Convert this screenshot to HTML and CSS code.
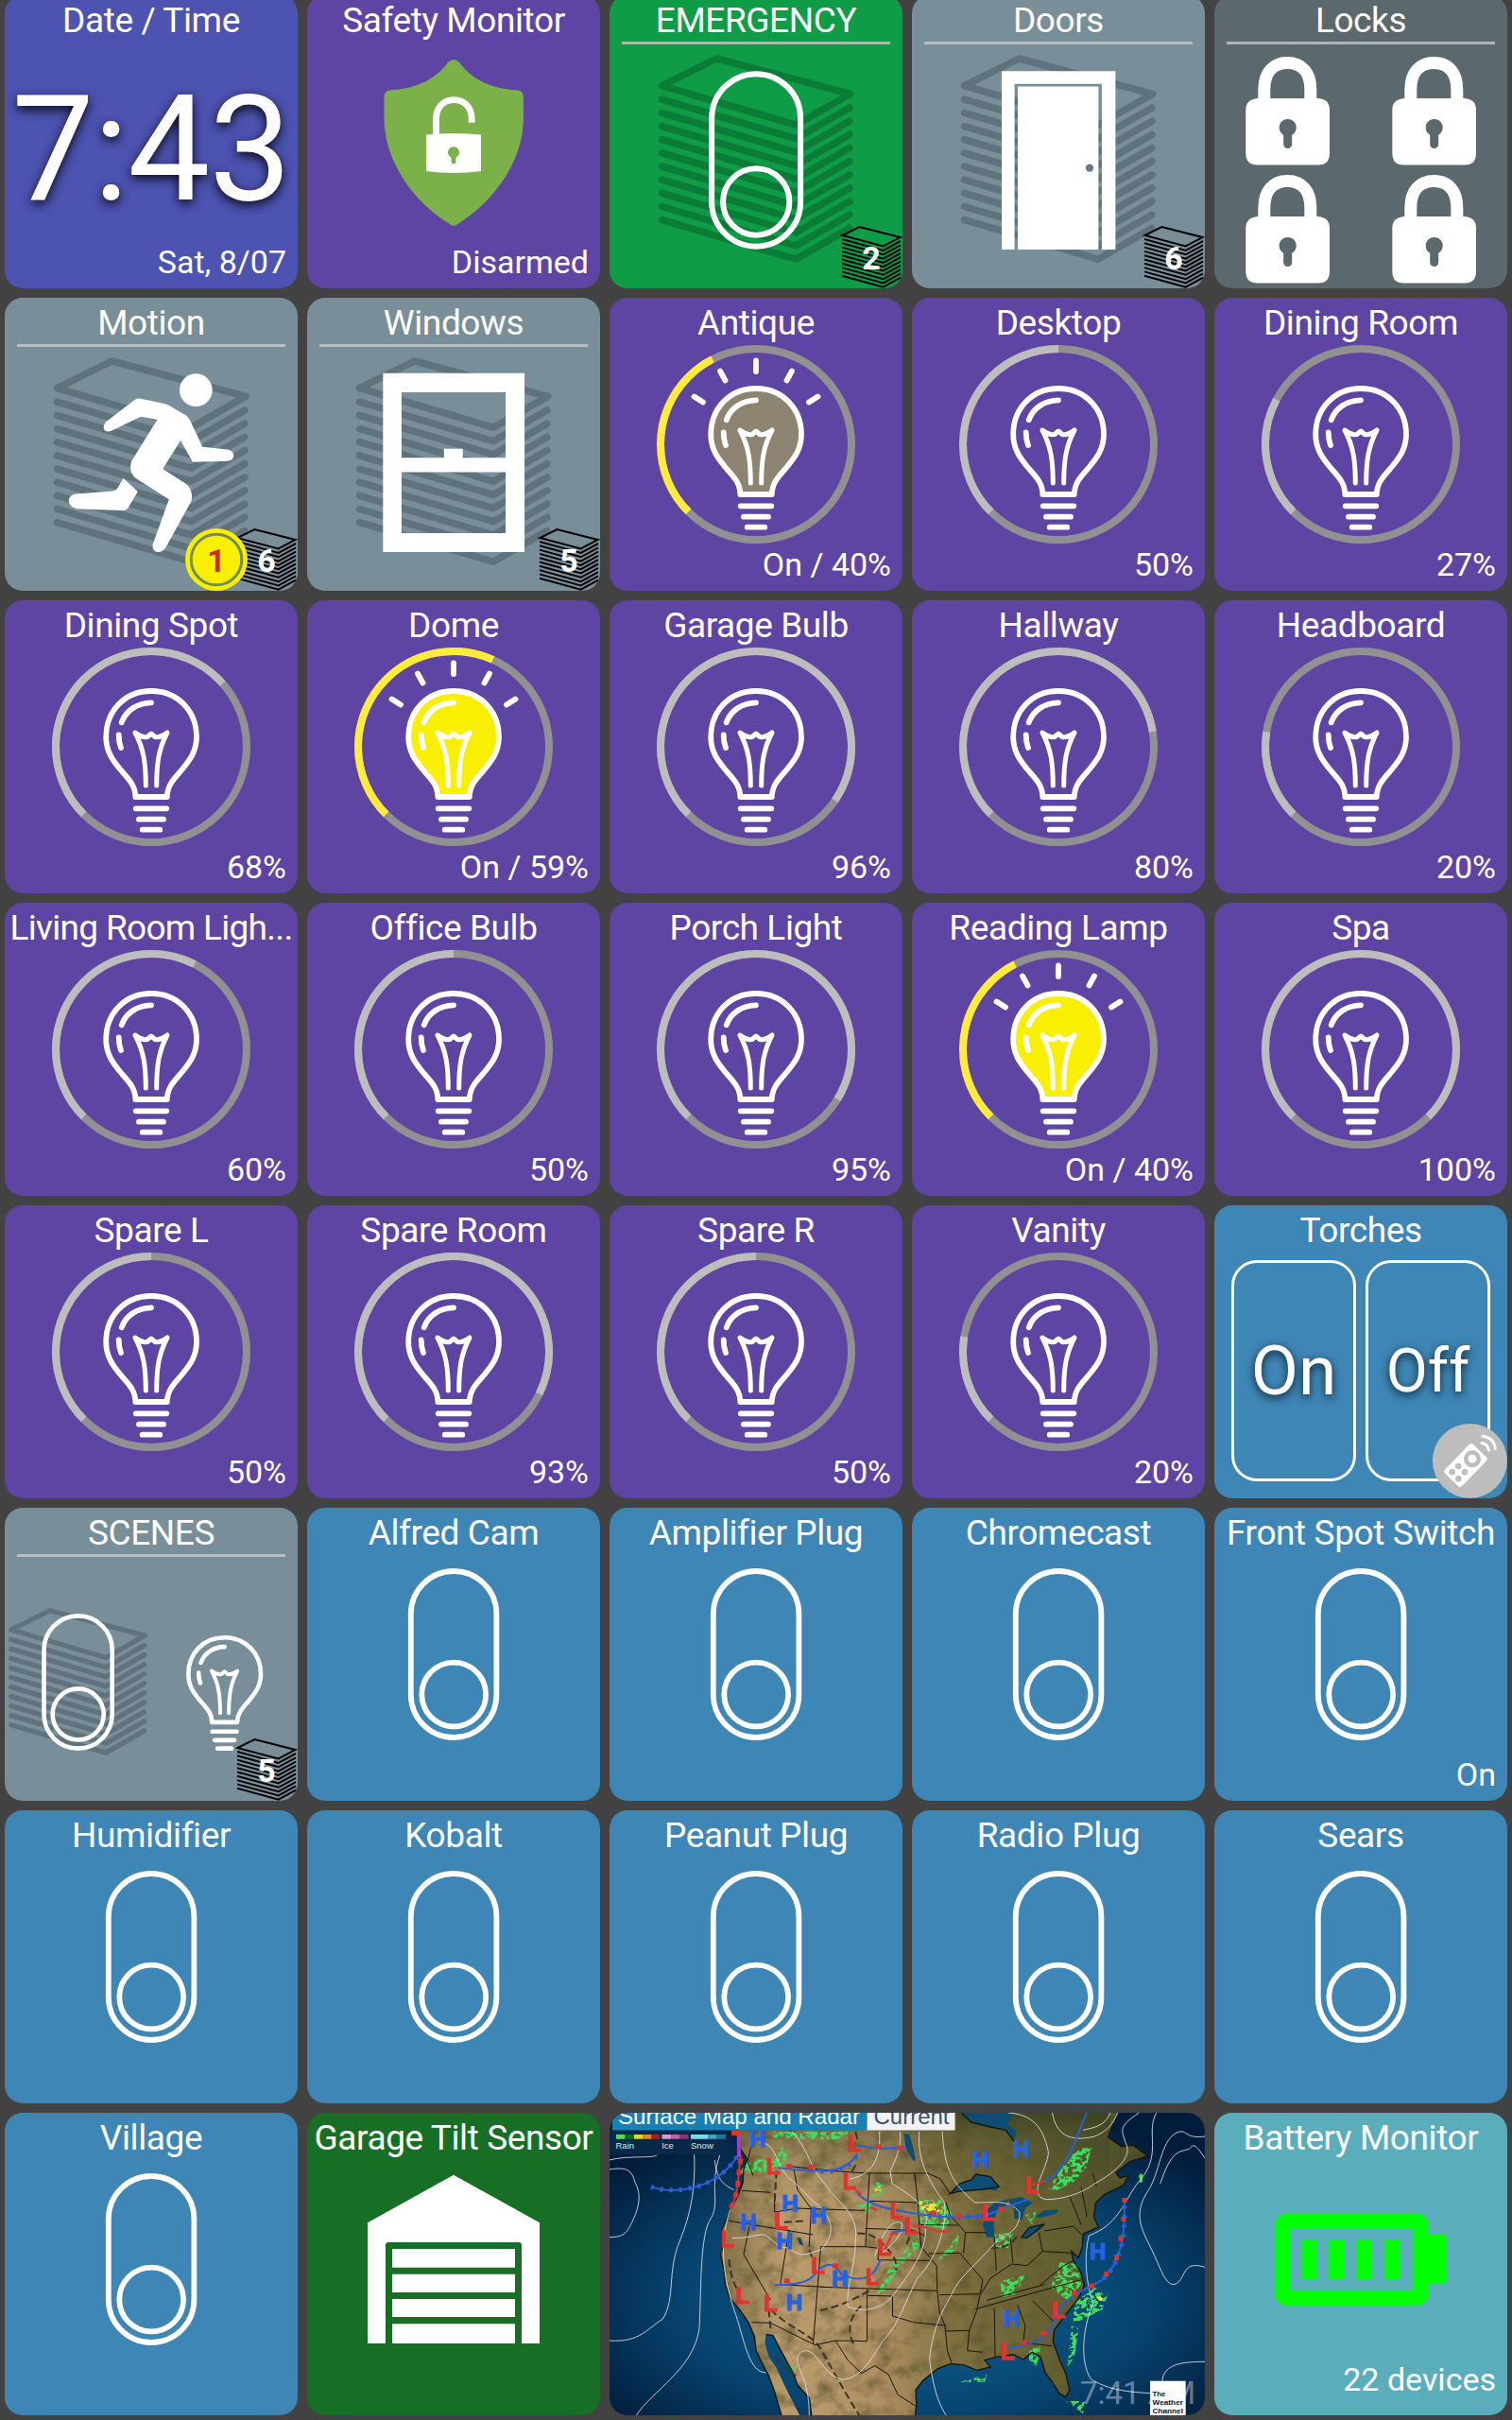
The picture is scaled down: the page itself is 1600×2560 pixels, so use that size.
FILE: index.html
```html
<!DOCTYPE html>
<html lang="en">
<head>
    <meta charset="UTF-8">
    <meta name="viewport" content="width=device-width, initial-scale=1.0">
    <title>Home Dashboard</title>
    <link rel="stylesheet" href="styles.css">
</head>
<body>

    <!-- Shared icons, all drawn on a 310x310 tile -->
    <svg class="sprite" width="0" height="0">
        <defs>
            <g id="stack" class="stack">
                <path d="M55.5 95.7 L113.4 67 L255 104.3 L197 137.2 Z"/>
                <path d="M55.5 110.2 l141.5 41.5 l57 -32.7 M55.5 124.4 l141.5 41.5 l57 -32.7 M55.5 138.6 l141.5 41.5 l57 -32.7 M55.5 152.7 l141.5 41.5 l57 -32.7 M55.5 166.9 l141.5 41.5 l57 -32.7 M55.5 181.1 l141.5 41.5 l57 -32.7 M55.5 195.2 l141.5 41.5 l57 -32.7 M55.5 209.4 l141.5 41.5 l57 -32.7 M55.5 223.5 l141.5 41.5 l57 -32.7 M55.5 237.7 l141.5 41.5 l57 -32.7"/>
            </g>
            <g id="pile" class="pile">
                <path d="M246.5 254 L264.4 245 L307.5 256 L289.7 265.5 Z"/>
                <path d="M246 258 l43.7 12 l18.3 -10 M246 262.3 l43.7 12 l18.3 -10 M246 266.6 l43.7 12 l18.3 -10 M246 270.9 l43.7 12 l18.3 -10 M246 275.2 l43.7 12 l18.3 -10 M246 279.5 l43.7 12 l18.3 -10 M246 283.8 l43.7 12 l18.3 -10 M246 288.1 l43.7 12 l18.3 -10 M246 292.4 l43.7 12 l18.3 -10 M246 296.7 l43.7 12 l18.3 -10"/>
            </g>
            <g id="switch" class="line">
                <rect x="109.8" y="67" width="90.6" height="176" rx="45.3"/>
                <circle cx="155.2" cy="197.5" r="33.9"/>
            </g>
            <path id="glass" d="M155 96 C183 96 203 117 203 144.5 C203 160 196 169 186 181 C177 191 172 197 171.8 208 H138.3 C138.3 197 133 191 124 181 C114 169 107.2 160 107.2 144.5 C107.2 117 127 96 155 96 Z"/>
            <g id="bulb" class="line">
                <use href="#glass"/>
                <path d="M138.7 220.3 H171.3 M142 231.7 H168 M145.7 242.7 H164.3"/>
                <path d="M155 108.3 C140 108.5 128 117 123.7 129.3 M120.7 142.5 Q120.7 150 123 156"/>
                <path class="thin" d="M149.3 196 C149.3 172 147 157 138 140 C143 144 148 145 151 144.5 L155 141 L159 144.5 C162 145 167 144 172 140 C163 157 160.7 172 160.7 196"/>
            </g>
            <path id="rays" class="line" d="M155 66.5 V78 M117 77.5 L122.5 87.5 M193 77.5 L187.5 87.5 M89.5 104.5 L99 110.5 M220.5 104.5 L211 110.5"/>
            <circle id="track" class="track" cx="155" cy="155" r="101"/>
            <g id="lock">
                <path class="shackle" d="M52.8 114 V100 C52.8 82 62 71.5 77.4 71.5 S101.8 82 101.8 100 V114"/>
                <path class="solid" fill-rule="evenodd" d="M46 109 H110 Q122 110 122 121 V167 Q122 179.5 110 179.5 H45.5 Q33.3 179.5 33.3 167 V121 Q33.3 110 46 109 Z M73.2 147.7 V157.5 A4.5 4.5 0 0 0 82.2 157.5 V147.7 A9 9 0 1 0 73.2 147.7 Z"/>
            </g>
        </defs>
    </svg>

    <main class="dashboard">

        <!-- Row 1 -->
        <section class="tile indigo">
            <h2>Date / Time</h2>
            <div class="clock">7:43</div>
            <p class="status">Sat, 8/07</p>
        </section>
        <section class="tile purple">
            <h2>Safety Monitor</h2>
            <svg class="icon" viewBox="0 0 310 310">
                <path class="shield" d="M149 71 Q155 65 161 71 C175 90 196 99 222 100.3 Q228.9 101 228.9 108 V130 C228.9 175 198 218 160 241.5 Q155 246 150 241.5 C112 218 81.5 175 81.5 130 V108 Q81.5 101 88 100.3 C114 99 135 90 149 71 Z"/>
                <path class="small-shackle" d="M136.5 148 V131 C136.5 118 145 110.7 155.3 110.7 S174.2 118 174.2 131 V134.7"/>
                <path class="solid" fill-rule="evenodd" d="M126 147.5 Q155 144.5 184 147.5 V186 Q155 190 126 186 Z M152.6 171.8 V176 A2.4 2.4 0 0 0 157.4 176 V171.8 A6 6 0 1 0 152.6 171.8 Z"/>
            </svg>
            <p class="status">Disarmed</p>
        </section>
        <section class="tile green">
            <h2 class="folder">EMERGENCY</h2>
            <svg class="icon" viewBox="0 0 310 310">
                <use href="#stack"/>
                <use href="#switch" transform="translate(-5.7 13.7) scale(1.037)"/>
                <use href="#pile"/>
            </svg>
            <span class="count">2</span>
        </section>
        <section class="tile slate">
            <h2 class="folder">Doors</h2>
            <svg class="icon" viewBox="0 0 310 310">
                <use href="#stack"/>
                <path class="solid" d="M95 80.3 H215.4 V269 H200.9 V93.8 H108.6 V269 H95 Z M112 96.4 H197.4 V269 H112 Z"/>
                <circle class="knob" cx="188" cy="182.6" r="4.2"/>
                <use href="#pile"/>
            </svg>
            <span class="count">6</span>
        </section>
        <section class="tile steel">
            <h2 class="folder">Locks</h2>
            <svg class="icon" viewBox="0 0 310 310">
                <use href="#lock"/>
                <use href="#lock" x="155"/>
                <use href="#lock" y="125"/>
                <use href="#lock" x="155" y="125"/>
            </svg>
        </section>

        <!-- Row 2 -->
        <section class="tile slate">
            <h2 class="folder">Motion</h2>
            <svg class="icon" viewBox="0 0 310 310">
                <use href="#stack"/>
                <circle class="solid" cx="202.3" cy="97.7" r="17.4"/>
                <path class="solid" d="M138 107.5 Q140.5 106 144 106.8 L170 112.3 Q174 113.5 177 115.8 L192 124.5 Q195 127 196.3 130 L209.3 157.7 L236 160.5 Q242.3 162 242.3 167 Q242 172 236 172.7 L199 173.8 L186 151 L167.2 181 L192 197 Q200 204 197.5 215 L170.5 264 Q167 269.5 161 269 Q156 267.5 156.6 261 L173.8 213.3 L138 190.5 Q131 184 134 173 L161.5 129 L144 125.7 L116 139.3 Q107 144 104.8 138.5 Q104 134.5 107.5 131 Z"/>
                <path class="solid" d="M125.6 191 L140.8 205 L131 221.5 Q129 225.5 124 225 L76 223.2 Q67.5 221 67.7 214 Q69 208 76 207.5 L114 204.5 Q118 204 119.5 201 Z"/>
                <use href="#pile"/>
                <circle class="coin" cx="224" cy="277" r="33"/>
                <circle class="coin-ring" cx="224" cy="277" r="26.8"/>
            </svg>
            <span class="count">6</span>
            <span class="count active">1</span>
        </section>
        <section class="tile slate">
            <h2 class="folder">Windows</h2>
            <svg class="icon" viewBox="0 0 310 310">
                <use href="#stack"/>
                <path class="solid" fill-rule="evenodd" d="M80.3 79.7 H230.1 V269 H80.3 Z M99.9 100 V169.3 H144.8 V159.7 H164.8 V169.3 H210.1 V100 Z M99.9 184.4 V249 H210.1 V184.4 Z"/>
                <use href="#pile"/>
            </svg>
            <span class="count">5</span>
        </section>
        <section class="tile purple">
            <h2>Antique</h2>
            <svg class="icon" viewBox="0 0 310 310">
                <use href="#track"/>
                <circle class="level on" cx="155" cy="155" r="101" pathLength="133.333" stroke-dasharray="40 200"/>
                <use href="#glass" class="dim"/>
                <use href="#bulb"/>
                <use href="#rays"/>
            </svg>
            <p class="status">On / 40%</p>
        </section>
        <section class="tile purple">
            <h2>Desktop</h2>
            <svg class="icon" viewBox="0 0 310 310">
                <use href="#track"/>
                <circle class="level" cx="155" cy="155" r="101" pathLength="133.333" stroke-dasharray="50 200"/>
                <use href="#bulb"/>
            </svg>
            <p class="status">50%</p>
        </section>
        <section class="tile purple">
            <h2>Dining Room</h2>
            <svg class="icon" viewBox="0 0 310 310">
                <use href="#track"/>
                <circle class="level" cx="155" cy="155" r="101" pathLength="133.333" stroke-dasharray="27 200"/>
                <use href="#bulb"/>
            </svg>
            <p class="status">27%</p>
        </section>

        <!-- Row 3 -->
        <section class="tile purple">
            <h2>Dining Spot</h2>
            <svg class="icon" viewBox="0 0 310 310">
                <use href="#track"/>
                <circle class="level" cx="155" cy="155" r="101" pathLength="133.333" stroke-dasharray="68 200"/>
                <use href="#bulb"/>
            </svg>
            <p class="status">68%</p>
        </section>
        <section class="tile purple">
            <h2>Dome</h2>
            <svg class="icon" viewBox="0 0 310 310">
                <use href="#track"/>
                <circle class="level on" cx="155" cy="155" r="101" pathLength="133.333" stroke-dasharray="59 200"/>
                <use href="#glass" class="lit"/>
                <use href="#bulb"/>
                <use href="#rays"/>
            </svg>
            <p class="status">On / 59%</p>
        </section>
        <section class="tile purple">
            <h2>Garage Bulb</h2>
            <svg class="icon" viewBox="0 0 310 310">
                <use href="#track"/>
                <circle class="level" cx="155" cy="155" r="101" pathLength="133.333" stroke-dasharray="96 200"/>
                <use href="#bulb"/>
            </svg>
            <p class="status">96%</p>
        </section>
        <section class="tile purple">
            <h2>Hallway</h2>
            <svg class="icon" viewBox="0 0 310 310">
                <use href="#track"/>
                <circle class="level" cx="155" cy="155" r="101" pathLength="133.333" stroke-dasharray="80 200"/>
                <use href="#bulb"/>
            </svg>
            <p class="status">80%</p>
        </section>
        <section class="tile purple">
            <h2>Headboard</h2>
            <svg class="icon" viewBox="0 0 310 310">
                <use href="#track"/>
                <circle class="level" cx="155" cy="155" r="101" pathLength="133.333" stroke-dasharray="20 200"/>
                <use href="#bulb"/>
            </svg>
            <p class="status">20%</p>
        </section>

        <!-- Row 4 -->
        <section class="tile purple">
            <h2 class="long">Living Room Ligh...</h2>
            <svg class="icon" viewBox="0 0 310 310">
                <use href="#track"/>
                <circle class="level" cx="155" cy="155" r="101" pathLength="133.333" stroke-dasharray="60 200"/>
                <use href="#bulb"/>
            </svg>
            <p class="status">60%</p>
        </section>
        <section class="tile purple">
            <h2>Office Bulb</h2>
            <svg class="icon" viewBox="0 0 310 310">
                <use href="#track"/>
                <circle class="level" cx="155" cy="155" r="101" pathLength="133.333" stroke-dasharray="50 200"/>
                <use href="#bulb"/>
            </svg>
            <p class="status">50%</p>
        </section>
        <section class="tile purple">
            <h2>Porch Light</h2>
            <svg class="icon" viewBox="0 0 310 310">
                <use href="#track"/>
                <circle class="level" cx="155" cy="155" r="101" pathLength="133.333" stroke-dasharray="95 200"/>
                <use href="#bulb"/>
            </svg>
            <p class="status">95%</p>
        </section>
        <section class="tile purple">
            <h2>Reading Lamp</h2>
            <svg class="icon" viewBox="0 0 310 310">
                <use href="#track"/>
                <circle class="level on" cx="155" cy="155" r="101" pathLength="133.333" stroke-dasharray="40 200"/>
                <use href="#glass" class="lit"/>
                <use href="#bulb"/>
                <use href="#rays"/>
            </svg>
            <p class="status">On / 40%</p>
        </section>
        <section class="tile purple">
            <h2>Spa</h2>
            <svg class="icon" viewBox="0 0 310 310">
                <use href="#track"/>
                <circle class="level" cx="155" cy="155" r="101" pathLength="133.333" stroke-dasharray="100 200"/>
                <use href="#bulb"/>
            </svg>
            <p class="status">100%</p>
        </section>

        <!-- Row 5 -->
        <section class="tile purple">
            <h2>Spare L</h2>
            <svg class="icon" viewBox="0 0 310 310">
                <use href="#track"/>
                <circle class="level" cx="155" cy="155" r="101" pathLength="133.333" stroke-dasharray="50 200"/>
                <use href="#bulb"/>
            </svg>
            <p class="status">50%</p>
        </section>
        <section class="tile purple">
            <h2>Spare Room</h2>
            <svg class="icon" viewBox="0 0 310 310">
                <use href="#track"/>
                <circle class="level" cx="155" cy="155" r="101" pathLength="133.333" stroke-dasharray="93 200"/>
                <use href="#bulb"/>
            </svg>
            <p class="status">93%</p>
        </section>
        <section class="tile purple">
            <h2>Spare R</h2>
            <svg class="icon" viewBox="0 0 310 310">
                <use href="#track"/>
                <circle class="level" cx="155" cy="155" r="101" pathLength="133.333" stroke-dasharray="50 200"/>
                <use href="#bulb"/>
            </svg>
            <p class="status">50%</p>
        </section>
        <section class="tile purple">
            <h2>Vanity</h2>
            <svg class="icon" viewBox="0 0 310 310">
                <use href="#track"/>
                <circle class="level" cx="155" cy="155" r="101" pathLength="133.333" stroke-dasharray="20 200"/>
                <use href="#bulb"/>
            </svg>
            <p class="status">20%</p>
        </section>
        <section class="tile blue">
            <h2>Torches</h2>
            <div class="torches">
                <button class="torch-on">On</button>
                <button class="torch-off">Off</button>
            </div>
            <svg class="icon" viewBox="0 0 310 310">
                <circle class="remote-bg" cx="270.4" cy="270.4" r="39.5"/>
                <g transform="rotate(-46 266 275)">
                    <rect class="solid" x="244.5" y="262.5" width="43" height="25" rx="3"/>
                </g>
                <circle class="remote-bg" cx="273" cy="268.3" r="9"/>
                <circle class="solid" cx="273" cy="268.3" r="4.5"/>
                <circle class="remote-bg" cx="258.3" cy="276" r="3.3"/>
                <circle class="remote-bg" cx="251.7" cy="282.3" r="3.3"/>
                <circle class="remote-bg" cx="265" cy="282.3" r="3.3"/>
                <circle class="remote-bg" cx="258.3" cy="289.3" r="3.3"/>
                <path class="wave" d="M283 251.5 Q289.5 252.5 290.3 259 M284 244.3 Q296 246 297.3 257.5"/>
            </svg>
        </section>

        <!-- Row 6 -->
        <section class="tile slate">
            <h2 class="folder">SCENES</h2>
            <svg class="icon" viewBox="0 0 310 310">
                <use href="#stack" transform="translate(-32.5 61.2) scale(.709)"/>
                <use href="#switch" transform="translate(-46 61) scale(.797)"/>
                <use href="#bulb" transform="translate(108.6 60.5) scale(.8)"/>
                <use href="#pile"/>
            </svg>
            <span class="count">5</span>
        </section>
        <section class="tile blue">
            <h2>Alfred Cam</h2>
            <svg class="icon" viewBox="0 0 310 310"><use href="#switch"/></svg>
        </section>
        <section class="tile blue">
            <h2>Amplifier Plug</h2>
            <svg class="icon" viewBox="0 0 310 310"><use href="#switch"/></svg>
        </section>
        <section class="tile blue">
            <h2>Chromecast</h2>
            <svg class="icon" viewBox="0 0 310 310"><use href="#switch"/></svg>
        </section>
        <section class="tile blue">
            <h2>Front Spot Switch</h2>
            <svg class="icon" viewBox="0 0 310 310"><use href="#switch"/></svg>
            <p class="status">On</p>
        </section>

        <!-- Row 7 -->
        <section class="tile blue">
            <h2>Humidifier</h2>
            <svg class="icon" viewBox="0 0 310 310"><use href="#switch"/></svg>
        </section>
        <section class="tile blue">
            <h2>Kobalt</h2>
            <svg class="icon" viewBox="0 0 310 310"><use href="#switch"/></svg>
        </section>
        <section class="tile blue">
            <h2>Peanut Plug</h2>
            <svg class="icon" viewBox="0 0 310 310"><use href="#switch"/></svg>
        </section>
        <section class="tile blue">
            <h2>Radio Plug</h2>
            <svg class="icon" viewBox="0 0 310 310"><use href="#switch"/></svg>
        </section>
        <section class="tile blue">
            <h2>Sears</h2>
            <svg class="icon" viewBox="0 0 310 310"><use href="#switch"/></svg>
        </section>

        <!-- Row 8 -->
        <section class="tile blue">
            <h2>Village</h2>
            <svg class="icon" viewBox="0 0 310 310"><use href="#switch"/></svg>
        </section>
        <section class="tile forest">
            <h2>Garage Tilt Sensor</h2>
            <svg class="icon" viewBox="0 0 310 310">
                <path class="solid" d="M155 65.7 L246 116.3 V244 H227 V140 Q227 137 224 137 H86 Q83 137 83 140 V244 H64 V116.3 Z"/>
                <path class="solid" d="M90 144 H220 V163.7 H90 Z M90 170.8 H220 V190 H90 Z M90 197 H220 V216 H90 Z M90 223.3 H220 V244 H90 Z"/>
            </svg>
        </section>

        <!-- Weather map -->
        <section class="tile weather">
            <svg class="map" viewBox="12.25 15 1543.5 960" preserveAspectRatio="none">
                <defs>
                    <radialGradient id="sea" cx=".5" cy=".6" r=".62">
                        <stop offset="0" stop-color="#0e6296"/>
                        <stop offset=".6" stop-color="#074470"/>
                        <stop offset="1" stop-color="#021d3b"/>
                    </radialGradient>
                    <linearGradient id="ground" x1="0" x2="1" y1="0" y2="0">
                        <stop offset="0" stop-color="#86734a"/>
                        <stop offset=".15" stop-color="#bb9d6e"/>
                        <stop offset=".38" stop-color="#ad8f62"/>
                        <stop offset=".55" stop-color="#7f7040"/>
                        <stop offset=".8" stop-color="#626032"/>
                        <stop offset="1" stop-color="#454a28"/>
                    </linearGradient>
                    <linearGradient id="north" x1="0" x2="0" y1="0" y2="1">
                        <stop offset="0" stop-color="#303a1c" stop-opacity=".75"/>
                        <stop offset=".28" stop-color="#303a1c" stop-opacity=".3"/>
                        <stop offset="1" stop-color="#303a1c" stop-opacity="0"/>
                    </linearGradient>
                    <filter id="terrain" x="0" y="0" width="1" height="1">
                        <feTurbulence type="fractalNoise" baseFrequency=".02 .02" numOctaves="5" seed="4"/>
                        <feColorMatrix values="0 0 0 0 .12  0 0 0 0 .1  0 0 0 0 .03  2 0 0 0 -.85"/>
                        <feComposite in2="SourceGraphic" operator="in" result="shade"/>
                        <feMerge><feMergeNode in="SourceGraphic"/><feMergeNode in="shade"/></feMerge>
                    </filter>
                    <filter id="speckle" x="-.2" y="-.2" width="1.4" height="1.4">
                        <feTurbulence type="fractalNoise" baseFrequency=".08" numOctaves="4" seed="9"/>
                        <feColorMatrix values="0 0 0 0 1  0 0 0 0 1  0 0 0 0 1  14 0 0 0 -6.3"/>
                        <feComposite in="SourceGraphic" operator="in"/>
                    </filter>
                </defs>
                <rect fill="url(#sea)" x="0" y="0" width="1600" height="1000"/>
                <g filter="url(#terrain)">
                    <path fill="url(#ground)" d="M330 10 L345 80 L352 130 L368 160 L360 195 L358 235 L345 280 L325 320 L318 350 L303 385 L308 430 L300 465 L310 520 L312 560 L325 605 L350 640 L372 680 L388 725 L392 770 L410 815 L425 850 L440 900 L458 975 H505 L480 915 L462 870 L445 825 L425 790 L415 745 L418 718 L436 722 L450 755 L470 800 L488 840 L500 880 L530 920 L536 975 H805 L808 940 L806 895 L825 865 L862 828 L895 812 L930 815 L965 832 L1000 822 L985 800 L1015 790 L1060 782 L1085 798 L1108 775 L1130 790 L1142 840 L1160 870 L1178 905 L1195 917 L1205 895 L1196 845 L1178 795 L1162 740 L1165 705 L1195 655 L1228 605 L1243 565 L1236 525 L1215 485 L1210 455 L1228 475 L1238 440 L1240 400 L1280 378 L1268 345 L1273 300 L1295 275 L1345 245 L1358 215 L1335 222 L1325 205 L1362 170 L1408 152 L1370 118 L1340 122 L1305 92 L1318 50 L1330 10 Z"/>
                </g>
                <path fill="url(#north)" d="M345 10 H1310 V300 H345 Z"/>
                <!-- Lakes and Hudson Bay -->
                <g class="lake">
                    <path d="M925 10 L950 45 L1000 60 L1040 70 L1060 105 L1068 75 L1045 50 L1060 10 Z"/>
                    <path d="M895 272 L920 240 L950 228 L962 210 L1000 218 L1022 250 L1015 262 L980 258 L945 265 L915 265 Z"/>
                    <path d="M990 410 L980 370 L990 325 L1010 300 L1045 290 L1040 310 L1015 330 L1008 370 L1012 410 Z"/>
                    <path d="M1045 290 L1080 282 L1110 300 L1090 318 L1082 355 L1062 350 L1060 320 Z"/>
                    <path d="M1080 410 L1100 380 L1140 368 L1130 385 L1095 412 Z M1115 345 L1140 325 L1175 322 L1170 335 L1130 348 Z"/>
                    <path d="M775 80 L790 85 L798 120 L806 165 L800 168 L780 125 Z M498 412 L508 412 L515 438 L505 432 Z"/>
                </g>
                <!-- Rain -->
                <g class="rain" filter="url(#speckle)">
                    <path d="M1150 255 L1185 190 L1225 130 L1262 125 L1248 190 L1215 235 L1170 262 Z M810 290 L870 292 L900 335 L885 385 L820 370 Z M690 280 L705 235 L722 240 L718 278 Z M650 310 L690 300 L685 335 Z"/>
                    <path d="M705 590 L735 510 L775 455 L812 405 L815 440 L760 510 L725 590 Z M860 485 L905 420 L920 395 L910 450 Z M1010 400 L1060 395 L1045 445 L1015 440 Z M1090 340 L1118 330 L1108 370 Z"/>
                    <path d="M1180 490 L1225 495 L1235 560 L1200 610 L1155 570 Z M1025 550 L1090 530 L1065 590 L1030 600 Z M1215 620 L1270 570 L1305 590 L1290 640 L1215 685 Z M1210 690 L1228 700 L1218 790 L1200 820 Z"/>
                    <path d="M345 210 L375 165 L440 160 L460 120 L478 160 L440 200 Z M425 75 L640 75 L600 100 L440 95 Z M1100 760 L1130 755 L1120 820 L1100 800 Z M920 870 L990 845 L985 870 Z M1195 930 L1245 930 L1240 970 Z M475 815 L500 820 L490 845 Z M1384 205 L1394 210 L1394 240 L1386 235 Z"/>
                </g>
                <g class="heavy" filter="url(#speckle)">
                    <path d="M815 295 L858 305 L885 330 L860 332 L820 322 Z M697 265 L712 245 L716 265 Z M1275 600 L1295 595 L1285 620 Z"/>
                </g>
                <!-- Borders -->
                <g class="border">
                    <path d="M355 262 L430 268 M385 95 L370 170 L385 215 M478 185 C560 195 640 206 690 207 L838 207 L870 225 L895 272 M440 270 L440 330 L500 318 L535 320 L530 440 M322 358 L540 402 M375 375 L360 465 L430 610 M478 385 L455 560 L570 568 M490 195 L500 260 L535 320 L675 325 M686 207 L676 440 L560 440 M560 440 L540 750 M680 295 L812 300 M675 382 L800 388 L830 405"/>
                    <path d="M676 440 L710 445 L708 482 L845 484 M560 568 L862 580 L860 500 L820 440 L815 370 L812 300 L803 207 M680 575 L680 740 L598 738 M682 595 L746 597 L746 660 L800 680 L882 690 M862 580 L868 650 L882 690 L888 770 L900 812 M868 593 L970 590 M882 708 L945 706 M380 680 L430 682 L545 752 L598 738 L630 800 L665 842 L700 818 L735 845 L760 910 L805 945"/>
                    <path d="M818 370 L915 372 M840 462 L920 460 L980 545 L965 640 L945 706 L940 770 L980 775 M885 300 L895 340 L935 395 L990 395 M935 395 L930 460 M1010 410 L1015 515 M1052 412 L1058 490 M1125 395 L1135 455 L1210 460 M960 638 L1235 545 M1010 635 L1012 790 M1070 625 L1090 690 L1085 745 L1160 755 M1110 612 L1165 680 M975 590 L1000 540 L1055 495 L1095 500 L1135 455 M1140 390 L1215 375 L1235 400 M1130 560 L1190 500 L1215 485 M1205 280 L1235 370 M1235 250 L1250 345 M1265 205 L1275 250 M990 610 L1140 560"/>
                </g>
                <path class="coast" d="M345 80 L352 130 L368 160 L360 195 L358 235 L345 280 L325 320 L318 350 L303 385 L308 430 L300 465 L310 520 L312 560 L325 605 L350 640 L372 680 L388 725 L392 770 L410 815 L425 850 L440 900 L458 975 M536 975 L530 920 L500 880 L488 840 L470 800 L450 755 L436 722 L418 718 M805 975 L808 940 L806 895 L825 865 L862 828 L895 812 L930 815 L965 832 L1000 822 L985 800 L1015 790 L1060 782 L1085 798 L1108 775 L1130 790 L1142 840 L1160 870 L1178 905 L1195 917 L1205 895 L1196 845 L1178 795 L1162 740 L1165 705 L1195 655 L1228 605 L1243 565 L1236 525 L1215 485 L1210 455 L1228 475 L1238 440 L1240 400 L1280 378 L1268 345 L1273 300 L1295 275 L1345 245 L1358 215 L1335 222 L1325 205 L1362 170 L1408 152 L1370 118 L1340 122 L1305 92 L1318 50 M925 15 L950 45 L1000 60 L1040 70 L1060 105 M895 272 L920 240 L950 228 L962 210 L1000 218 L1022 250 L980 258 L915 265 Z M1080 410 L1100 380 L1140 368 L1095 412 Z"/>
                <path class="trough" d="M445 200 L440 310 M465 362 L520 358 M655 398 C690 395 710 415 735 450 S755 500 755 515 M322 480 C325 530 335 560 350 590 M430 640 C480 700 540 720 560 765 C600 850 630 920 660 975 M558 642 C610 630 650 605 685 580 M665 628 C635 660 625 710 648 755 M530 450 L545 500 M425 640 L430 700 M440 790 L495 850 M650 75 L655 100 M650 180 L640 205 M790 410 L780 440 M1000 445 C1040 445 1065 425 1070 400"/>
                <!-- Isobars -->
                <g class="isobar">
                    <path d="M12 195 C60 185 70 200 78 235 C95 270 90 310 75 350 C60 390 55 410 12 410 M12 165 C60 150 120 160 135 150 M232 145 C235 250 225 330 195 420 C160 520 185 600 150 670 C110 700 90 745 12 738 M298 150 C270 250 300 300 275 350 C245 400 250 600 245 700 C230 830 120 900 82 975 M285 165 C290 230 310 245 335 260 M325 322 C290 450 315 560 335 640 C360 720 370 840 418 840"/>
                    <path d="M330 412 C370 415 390 400 415 402 C450 430 440 440 480 445 C510 480 530 460 560 450 C600 400 590 350 555 310 C520 280 510 250 475 220 C440 170 445 110 400 110 M485 75 C530 130 530 190 570 240 C600 300 660 330 650 420 C650 500 625 570 630 630 C670 650 720 640 750 590 C800 510 840 440 830 370 C850 330 800 280 745 240 L740 200 C760 150 770 110 765 75 M712 75 C715 140 705 210 635 225"/>
                    <path d="M815 75 C810 170 840 230 880 300 C890 370 860 480 810 540 C770 640 760 690 720 740 C690 800 660 860 615 862 C580 850 570 820 540 780 C520 760 495 770 500 810 C510 850 530 880 530 975 M875 75 C880 190 900 240 960 300 C1010 300 1050 290 1075 330 C1080 380 1040 410 1020 415 C980 480 920 530 900 590 C860 670 845 740 842 800 C850 870 860 930 885 975"/>
                    <path d="M700 470 C720 400 740 350 770 365 C775 400 740 440 720 460 M1045 15 C1120 20 1140 80 1150 140 C1150 190 1090 280 1145 290 C1200 290 1250 260 1270 240 C1330 200 1370 150 1350 110 C1340 70 1330 60 1385 15 M1160 15 C1170 80 1200 110 1270 90 C1310 70 1320 40 1330 15 M1240 70 C1280 60 1300 50 1310 15 M1430 15 C1400 80 1450 150 1380 240 C1340 310 1330 370 1255 405 C1240 480 1250 560 1265 620 C1240 700 1230 800 1260 860 C1300 890 1340 900 1414 905 M1556 90 C1500 100 1510 60 1480 80 C1440 110 1440 200 1410 260 C1370 330 1390 380 1410 430 C1440 500 1450 560 1475 560 C1510 550 1490 480 1556 505 M1556 160 C1530 110 1525 115 1515 130 C1490 140 1470 130 1440 240 M1445 866 C1450 810 1500 805 1556 805"/>
                </g>
                <!-- Fronts -->
                <path class="cold" d="M120 250 C180 275 290 260 345 150 M450 190 C540 200 620 220 655 145 M655 118 C690 130 740 130 782 124 M1250 15 C1220 90 1210 180 1140 235 M440 562 C500 560 530 555 550 520 C580 480 600 500 615 530 C680 560 700 530 715 480 M655 270 C690 320 780 330 835 340 C890 350 980 350 1010 330 L1095 290 M1347 285 C1350 400 1340 490 1290 545 C1230 590 1190 590 1165 680 C1150 720 1130 750 1045 762 M745 395 L790 385"/>
                <path class="warm" d="M353 150 C345 200 350 270 325 320 M650 260 L665 275 M690 315 L705 325 M800 375 C840 370 850 400 895 392 M745 400 L725 450 M740 400 L760 400 M1108 245 L1140 232"/>
                <path class="cold-teeth" d="M120 250 C180 275 290 260 345 150 M560 200 C600 205 640 190 655 145 M1347 310 C1350 400 1340 490 1290 545 M840 340 C890 350 980 350 1010 330"/>
                <path class="warm-teeth" d="M353 160 C345 200 350 270 325 320 M470 185 H486 M527 188 H543 M703 123 H717 M760 126 H780 M1347 285 V300 M1345 345 V360 M1338 405 V425 M1327 465 V485 M1300 520 V535 M1255 565 H1270 M1210 588 H1225 M1130 715 H1145 M1080 745 H1096 M465 548 H480 M590 500 H605 M845 335 H860 M910 342 H925 M1020 320 H1035"/>
                <path class="occluded" d="M347 75 L348 155"/>
                <rect class="legend-bg" x="12" y="70" width="304" height="78"/>
            </svg>
            <svg class="map" viewBox="0 0 630 320">
                <rect fill="#1780b5" x="3" y="0" width="269.6" height="18.5"/>
                <rect fill="#f2f2f4" x="272.6" y="0" width="93" height="18.5"/>
                <text class="map-title" x="9" y="11.5" textLength="256" lengthAdjust="spacingAndGlyphs">Surface Map and Radar</text>
                <text class="map-title current" x="279.5" y="11.5" textLength="80" lengthAdjust="spacingAndGlyphs">Current</text>
                <g>
                    <path fill="#4ee06a" d="M7 23h9.5v4.8H7z"/><path fill="#116a26" d="M16.5 23h9.5v4.8h-9.5z"/>
                    <path fill="#e6d429" d="M26 23h9.5v4.8H26z"/><path fill="#e08a22" d="M35.5 23h9v4.8h-9z"/>
                    <path fill="#a5231f" d="M44.5 23h8.5v4.8h-8.5z"/>
                    <path fill="#d59bc9" d="M55.4 23h10v4.8h-10z"/><path fill="#bb66a8" d="M65.4 23h9v4.8h-9z"/><path fill="#8c3373" d="M74.4 23h9v4.8h-9z"/>
                    <path fill="#79dbe9" d="M86 23h18.5v4.8H86z"/><path fill="#3ba5c4" d="M104.5 23h9v4.8h-9z"/><path fill="#1d7697" d="M113.5 23h9.5v4.8h-9.5z"/>
                </g>
                <g class="legend">
                    <text x="6.5" y="37.7">Rain</text>
                    <text x="55.2" y="37.7">Ice</text>
                    <text x="86" y="37.7">Snow</text>
                </g>
                <g class="high">
                    <text x="156.6" y="35.7">H</text>
                    <text x="190.9" y="103.7">H</text>
                    <text x="146.8" y="123.7">H</text>
                    <text x="221.1" y="117">H</text>
                    <text x="185.2" y="143.7">H</text>
                    <text x="243.6" y="184.3">H</text>
                    <text x="195.4" y="209">H</text>
                    <text x="392.6" y="58.3">H</text>
                    <text x="435.8" y="47">H</text>
                    <text x="516.6" y="155">H</text>
                    <text x="425.2" y="225.7">H</text>
                </g>
                <g class="low">
                    <text x="259.5" y="41">L</text>
                    <text x="173.4" y="65">L</text>
                    <text x="254.2" y="81">L</text>
                    <text x="181.5" y="123.3">L</text>
                    <text x="124.8" y="142.3">L</text>
                    <text x="304" y="111.7">L</text>
                    <text x="319.5" y="128.3">L</text>
                    <text x="290.5" y="151">L</text>
                    <text x="220.7" y="170.3">L</text>
                    <text x="278.3" y="182.3">L</text>
                    <text x="141.1" y="201.7">L</text>
                    <text x="170.5" y="210">L</text>
                    <text x="401.1" y="114.3">L</text>
                    <text x="447.2" y="85">L</text>
                    <text x="475" y="216.7">L</text>
                    <text x="421.1" y="260.7">L</text>
                </g>
                <path fill="#e3322f" d="M129 18.5 H139 V24 H129 Z"/>
                <text class="map-time" x="498" y="307.5">7:41 AM</text>
                <rect fill="#fff" x="572" y="283.7" width="37.7" height="36.3"/>
                <g class="brand">
                    <text x="574.5" y="299.5">The</text>
                    <text x="574.5" y="308.5" textLength="32.5" lengthAdjust="spacingAndGlyphs">Weather</text>
                    <text x="574.5" y="317.5" textLength="32.5" lengthAdjust="spacingAndGlyphs">Channel</text>
                </g>
            </svg>
        </section>

        <section class="tile teal">
            <h2>Battery Monitor</h2>
            <svg class="icon" viewBox="0 0 310 310">
                <g class="battery">
                    <path fill-rule="evenodd" d="M78 106.7 H213 Q226.7 107 226.7 121 V128.7 H240.5 Q245.7 128.7 245.7 134 V176 Q245.7 181.3 240.5 181.3 H226.7 V190 Q226.7 203.7 213 203.7 H78 Q64.3 203.7 64.3 190 V121 Q64.3 107 78 106.7 Z M80.3 122.8 V187.8 H210.7 V122.8 Z"/>
                    <path d="M92 134 h16.4 v42.7 h-16.4 Z M121.3 134 h16.4 v42.7 h-16.4 Z M150.7 134 h16.4 v42.7 h-16.4 Z M180 134 h16.4 v42.7 h-16.4 Z"/>
                </g>
            </svg>
            <p class="status">22 devices</p>
        </section>

    </main>

</body>
</html>
```

FILE: styles.css
```css
/* Reset some default browser styles */
body, h2, p {
    margin: 0;
    padding: 0;
    box-sizing: border-box;
}

body {
    height: 2560px;
    overflow: hidden;
    font-family: Roboto, sans-serif;
    background-color: #424242;
    color: #fff;
}

.sprite {
    display: block;
}

/* Grid of tiles, scrolled slightly past the top */
.dashboard {
    display: grid;
    grid-template-columns: repeat(5, 310px);
    grid-template-rows: repeat(7, 310px) 320px;
    gap: 10px;
    margin-top: -5px;
    padding: 0 5px;
}

/* Every part of a tile shares one cell */
.tile {
    display: grid;
    grid-template: 310px / 310px;
    overflow: hidden;
    border-radius: 19px;
}

.tile > * {
    grid-area: 1 / 1;
}

.indigo { background-color: #4c53b1; }
.purple { background-color: #5e45a4; }
.green { background-color: #0e9c46; }
.slate { background-color: #788f9a; }
.steel { background-color: #5b696e; }
.blue { background-color: #3e86b6; }
.forest { background-color: #166f25; }
.teal { background-color: #5aaebc; }

.tile h2 {
    align-self: start;
    font-size: 37px;
    font-weight: 400;
    line-height: 53px;
    letter-spacing: -0.4px;
    text-align: center;
    white-space: nowrap;
}

.tile h2.folder {
    height: 52px;
    margin: 0 13px;
    border-bottom: 3px solid rgba(200, 200, 200, 0.8);
}

.tile h2.long {
    letter-spacing: -0.7px;
}

.status {
    align-self: end;
    padding-right: 12px;
    font-size: 34px;
    line-height: 55px;
    text-align: right;
}

.icon {
    width: 310px;
    height: 310px;
}

.clock {
    align-self: start;
    font-size: 155px;
    line-height: 326px;
    letter-spacing: -1px;
    text-align: center;
    white-space: nowrap;
    text-shadow: 0 4px 12px rgba(0, 0, 0, 0.9);
}

/* Number on the pile in the corner */
.count {
    place-self: end;
    width: 66px;
    font-size: 34px;
    font-weight: 700;
    line-height: 63px;
    text-align: center;
}

.count.active {
    margin-right: 53px;
    color: #c7321c;
}

/* Icon parts */
.line {
    fill: none;
    stroke: #fff;
    stroke-width: 5.8;
    stroke-linecap: round;
    stroke-linejoin: round;
}

.thin {
    stroke-width: 5;
}

.solid {
    fill: #fff;
}

.stack {
    fill: none;
    stroke: #000;
    stroke-width: 7.5;
    stroke-linecap: round;
    stroke-linejoin: round;
    opacity: 0.2;
}

.pile {
    fill: none;
    stroke: #000;
    stroke-width: 2;
}

.track,
.level {
    fill: none;
    stroke: #919191;
    stroke-width: 8;
}

.level {
    stroke: #bdbdbd;
    transform: rotate(135deg);
    transform-origin: 155px 155px;
}

.level.on {
    stroke: #ffeb3b;
}

.lit {
    fill: #f8f000;
}

.dim {
    fill: #8c8370;
}

.shield {
    fill: #7cb14a;
}

.shackle,
.small-shackle {
    fill: none;
    stroke: #fff;
    stroke-width: 13;
}

.small-shackle {
    stroke-width: 6.8;
}

.knob {
    fill: #667b87;
}

.coin {
    fill: #f8f000;
}

.coin-ring {
    fill: none;
    stroke: #738a55;
    stroke-width: 3;
}

.battery {
    fill: #0f0;
}

/* Torches buttons */
.torches {
    display: grid;
    grid-template-columns: 1fr 1fr;
    gap: 10px;
    padding: 58px 18px 18px;
}

.torches button {
    padding: 0;
    border: 3px solid #fff;
    border-radius: 27px;
    background: none;
    color: #fff;
    font-family: inherit;
    text-shadow: 0 3px 10px rgba(0, 0, 0, 0.8);
}

.torch-on {
    font-size: 73px;
}

.torch-off {
    font-size: 64px;
}

.remote-bg {
    fill: #bdbdbd;
}

.wave {
    fill: none;
    stroke: #fff;
    stroke-width: 3;
    stroke-linecap: round;
}

/* Weather map */
.weather {
    grid-column: span 2;
    grid-template: 320px / 630px;
}

.map {
    width: 630px;
    height: 320px;
}

.map path {
    vector-effect: non-scaling-stroke;
}

.lake {
    fill: #0d4c73;
}

.rain {
    fill: #3edc5b;
}

.heavy {
    fill: #f4e81c;
}

.border,
.coast,
.trough,
.isobar,
.cold,
.warm,
.cold-teeth,
.warm-teeth,
.occluded {
    fill: none;
    stroke: #17150c;
    stroke-width: 1;
}

.coast {
    stroke-width: 1.4;
}

.trough {
    stroke: #3b3526;
    stroke-width: 2;
    stroke-dasharray: 8 4;
}

.isobar {
    stroke: #d8dde0;
    stroke-width: 0.9;
}

.cold {
    stroke: #2a5fd8;
    stroke-width: 2;
}

.warm {
    stroke: #e0312d;
    stroke-width: 2;
}

.cold-teeth {
    stroke: #2a5fd8;
    stroke-width: 5;
    stroke-dasharray: 3 7;
}

.warm-teeth {
    stroke: #e0312d;
    stroke-width: 5;
    stroke-dasharray: 6 6;
}

.occluded {
    stroke: #a13ae0;
    stroke-width: 4;
}

.legend-bg {
    fill: #0a2d4d;
    fill-opacity: 0.75;
}

.map-title {
    font: 24px "Liberation Sans", sans-serif;
    fill: #fff;
}

.map-title.current {
    fill: #3b5169;
}

.legend {
    font: 9.5px "Liberation Sans", sans-serif;
    fill: #dfe6ea;
}

.high,
.low {
    font: bold 24px "Liberation Sans", sans-serif;
    text-anchor: middle;
    fill: #2363e4;
    stroke: #2363e4;
    stroke-width: 1.2;
}

.low {
    fill: #e3322f;
    stroke: #e3322f;
}

.map-time {
    font-size: 33px;
    fill: #fff;
    fill-opacity: 0.4;
}

.brand {
    font: bold 7.8px "Liberation Sans", sans-serif;
    fill: #111;
}
```
